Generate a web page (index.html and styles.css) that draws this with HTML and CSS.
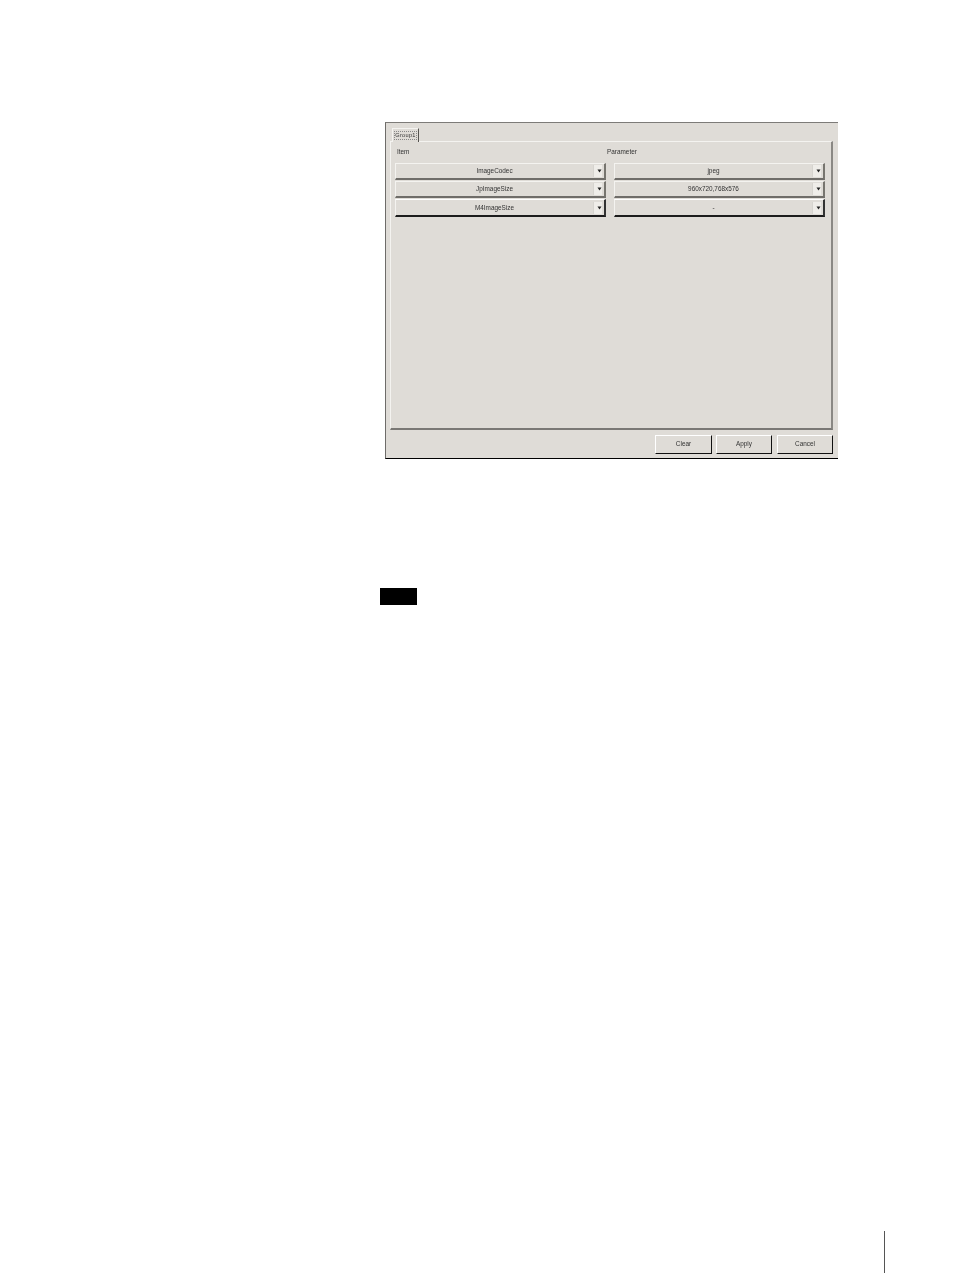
FILE: index.html
```html
<!DOCTYPE html>
<html lang="en">
<head>
<meta charset="utf-8">
<title>Group1</title>
<link rel="stylesheet" href="styles.css">
</head>
<body>
<main class="page">
  <section class="window">
    <div class="tabs"><div class="tab"><span class="tab-label">Group1</span></div></div>
    <div class="panel">
      <div class="grid">
        <div class="head head-item">Item</div>
        <div class="head head-param">Parameter</div>
        <div class="combo"><span class="combo-text">ImageCodec</span><span class="arrow"><svg width="5" height="4" viewBox="0 0 5 4"><path d="M0.5 0.5H4.5L2.5 3.5Z" fill="#222"/></svg></span></div>
        <div class="combo"><span class="combo-text">jpeg</span><span class="arrow"><svg width="5" height="4" viewBox="0 0 5 4"><path d="M0.5 0.5H4.5L2.5 3.5Z" fill="#222"/></svg></span></div>
        <div class="combo"><span class="combo-text">JpImageSize</span><span class="arrow"><svg width="5" height="4" viewBox="0 0 5 4"><path d="M0.5 0.5H4.5L2.5 3.5Z" fill="#222"/></svg></span></div>
        <div class="combo"><span class="combo-text">960x720,768x576</span><span class="arrow"><svg width="5" height="4" viewBox="0 0 5 4"><path d="M0.5 0.5H4.5L2.5 3.5Z" fill="#222"/></svg></span></div>
        <div class="combo combo-last"><span class="combo-text">M4ImageSize</span><span class="arrow"><svg width="5" height="4" viewBox="0 0 5 4"><path d="M0.5 0.5H4.5L2.5 3.5Z" fill="#222"/></svg></span></div>
        <div class="combo combo-last"><span class="combo-text">-</span><span class="arrow"><svg width="5" height="4" viewBox="0 0 5 4"><path d="M0.5 0.5H4.5L2.5 3.5Z" fill="#222"/></svg></span></div>
      </div>
    </div>
    <div class="actions">
      <div class="btn btn-clear">Clear</div>
      <div class="btn btn-apply">Apply</div>
      <div class="btn btn-cancel">Cancel</div>
    </div>
  </section>
  <div class="note"></div>
  <div class="folio"></div>
</main>
</body>
</html>
```

FILE: styles.css
```css
* { box-sizing: border-box; }
html, body { margin: 0; padding: 0; background: #fff; }
body { font-family: "Liberation Sans", Arial, sans-serif; overflow: hidden; }
.page { width: 954px; height: 1273px; padding: 122px 0 0 380px; display: flex; flex-direction: column; overflow: hidden; }

.window {
  width: 453px; height: 337px; margin-left: 5px; padding: 5px 0 0 4px;
  background: #dfdcd7;
  border-top: 1px solid #7d7b78; border-left: 1px solid #6e6c69; border-bottom: 1px solid #000;
  font-size: 6.4px; line-height: 10px; color: #333;
  filter: blur(0.3px);
}
.tabs { display: flex; height: 13px; padding-left: 2px; }
.tab {
  width: 27px; height: 14px; padding: 2px 0 0 1px; position: relative; z-index: 1;
  background: #dfdcd7;
  border-top: 1px solid #f4f3f0; border-left: 1px solid #f4f3f0; border-right: 1px solid #55534f;
}
.tab-label { display: block; width: 23px; height: 9px; line-height: 7px; border: 1px dotted #888; text-align: center; font-size: 5.6px; letter-spacing: 0.3px; white-space: nowrap; overflow: hidden; }

.panel {
  width: 443px; height: 289px; padding: 4px 6px 0 4px;
  border-top: 1px solid #f4f3f0; border-left: 1px solid #f4f3f0;
  border-right: 2px solid #8a8884; border-bottom: 2px solid #7a7875;
}
.grid { display: grid; grid-template-columns: 211px 211px; column-gap: 8px; grid-auto-rows: 17px; row-gap: 1px; }
.head { height: 17px; line-height: 12px; }
.head-item { padding-left: 2px; }
.head-param { margin-left: -7px; }

.combo {
  display: flex; align-items: center; height: 17px; margin-top: -1px;
  background: #dfdcd7;
  border-top: 1px solid #f4f3f0; border-left: 1px solid #f4f3f0;
  border-right: 2px solid #77756f; border-bottom: 2px solid #6f6d69;
}
.combo-last { height: 18px; border-top-color: #fff; border-right-color: #333; border-bottom-color: #1c1c1c; }
.combo-text { flex: 1; text-align: center; white-space: nowrap; }
.arrow { width: 9px; height: 12px; margin-right: 2px; display: flex; align-items: center; justify-content: flex-end; background: #efede9; border-left: 1px solid #d6d4cf; }

.actions { display: flex; gap: 4px; margin: 5px 0 0 265px; }
.btn {
  width: 57px; height: 19px; line-height: 16px; text-align: center;
  background: #dfdcd7;
  border-top: 1px solid #fff; border-left: 1px solid #fff;
  border-right: 1px solid #111; border-bottom: 1px solid #111;
}
.btn-apply { width: 56px; }
.btn-cancel { width: 56px; margin-left: 1px; }

.note { width: 37px; height: 17px; margin-top: 129px; background: #000; }
.folio { width: 1px; height: 42px; margin: 626px 0 0 504px; background: #555; }
```
